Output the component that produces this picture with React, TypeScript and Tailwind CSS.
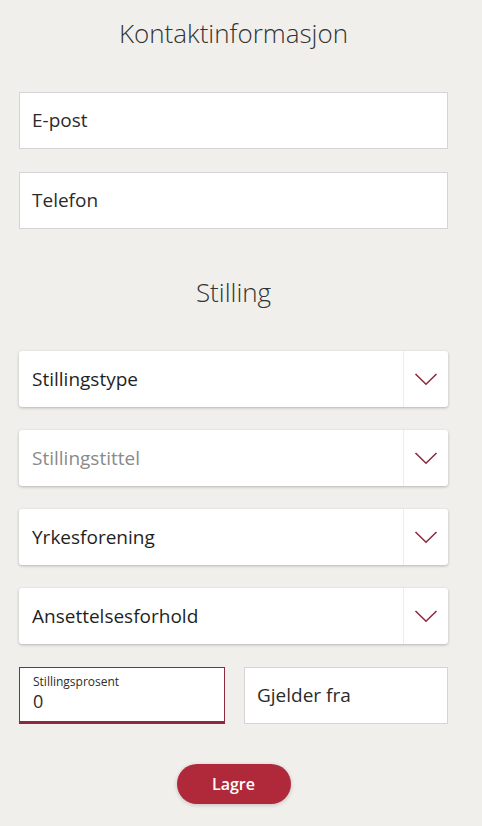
import { ReactNode } from "react";

function Chevron() {
  return (
    <svg width="24" height="14" viewBox="0 0 24 14" fill="none" className="text-[#8c2b3f]">
      <path d="M1.5 2 12 12.2 22.5 2" stroke="currentColor" strokeWidth="1.6" />
    </svg>
  );
}

function TextField({ label }: { label: string }) {
  return (
    <div className="h-[57px] bg-white border border-[#d6d4d2] flex items-center px-[12px] text-[19px] text-[#2b2b2b]">
      {label}
    </div>
  );
}

function SelectField({ label, muted }: { label: string; muted?: boolean }) {
  return (
    <div className="h-[56px] bg-white rounded-[3px] shadow-[0_1px_3px_rgba(0,0,0,0.25)] flex">
      <div
        className={`flex-1 flex items-center px-[13px] text-[19px] ${muted ? "text-[#8a8a8a]" : "text-[#1f1f1f]"}`}
      >
        {label}
      </div>
      <div className="w-[45px] border-l border-[#eeeceb] flex items-center justify-center">
        <Chevron />
      </div>
    </div>
  );
}

function Heading({ children }: { children: ReactNode }) {
  return <h2 className="text-center text-[26px] font-light text-[#333] leading-none">{children}</h2>;
}

export default function App() {
  return (
    <div
      className="min-h-[826px] bg-[#f1efec] px-[19px] pt-[20px] pb-[23px]"
      style={{ fontFamily: '"Open Sans", "Noto Sans", sans-serif' }}
    >
      <div className="w-[429px]">
        <Heading>Kontaktinformasjon</Heading>

        <div className="mt-[46px] flex flex-col gap-[23px]">
          <TextField label="E-post" />
          <TextField label="Telefon" />
        </div>

        <div className="mt-[50px]">
          <Heading>Stilling</Heading>
        </div>

        <div className="mt-[46px] flex flex-col gap-[23px]">
          <SelectField label="Stillingstype" />
          <SelectField label="Stillingstittel" muted />
          <SelectField label="Yrkesforening" />
          <SelectField label="Ansettelsesforhold" />
        </div>

        <div className="mt-[23px] flex gap-[19px]">
          <div className="flex-1 h-[57px] bg-white border border-[#8c2b3f] border-b-[3px] px-[13px] pt-[6px]">
            <div className="text-[12px] leading-[16px] text-[#2b2b2b]">Stillingsprosent</div>
            <div className="text-[18px] leading-[22px] text-[#2b2b2b]">0</div>
          </div>
          <div className="flex-1 h-[57px] bg-white border border-[#d6d4d2] flex items-center px-[12px] text-[19px] text-[#2b2b2b]">
            Gjelder fra
          </div>
        </div>

        <div className="mt-[40px] flex justify-center">
          <button className="w-[114px] h-[40px] rounded-full bg-[#b0293a] text-white text-[16px] font-semibold shadow-[0_1px_4px_rgba(0,0,0,0.2)]">
            Lagre
          </button>
        </div>
      </div>
    </div>
  );
}
